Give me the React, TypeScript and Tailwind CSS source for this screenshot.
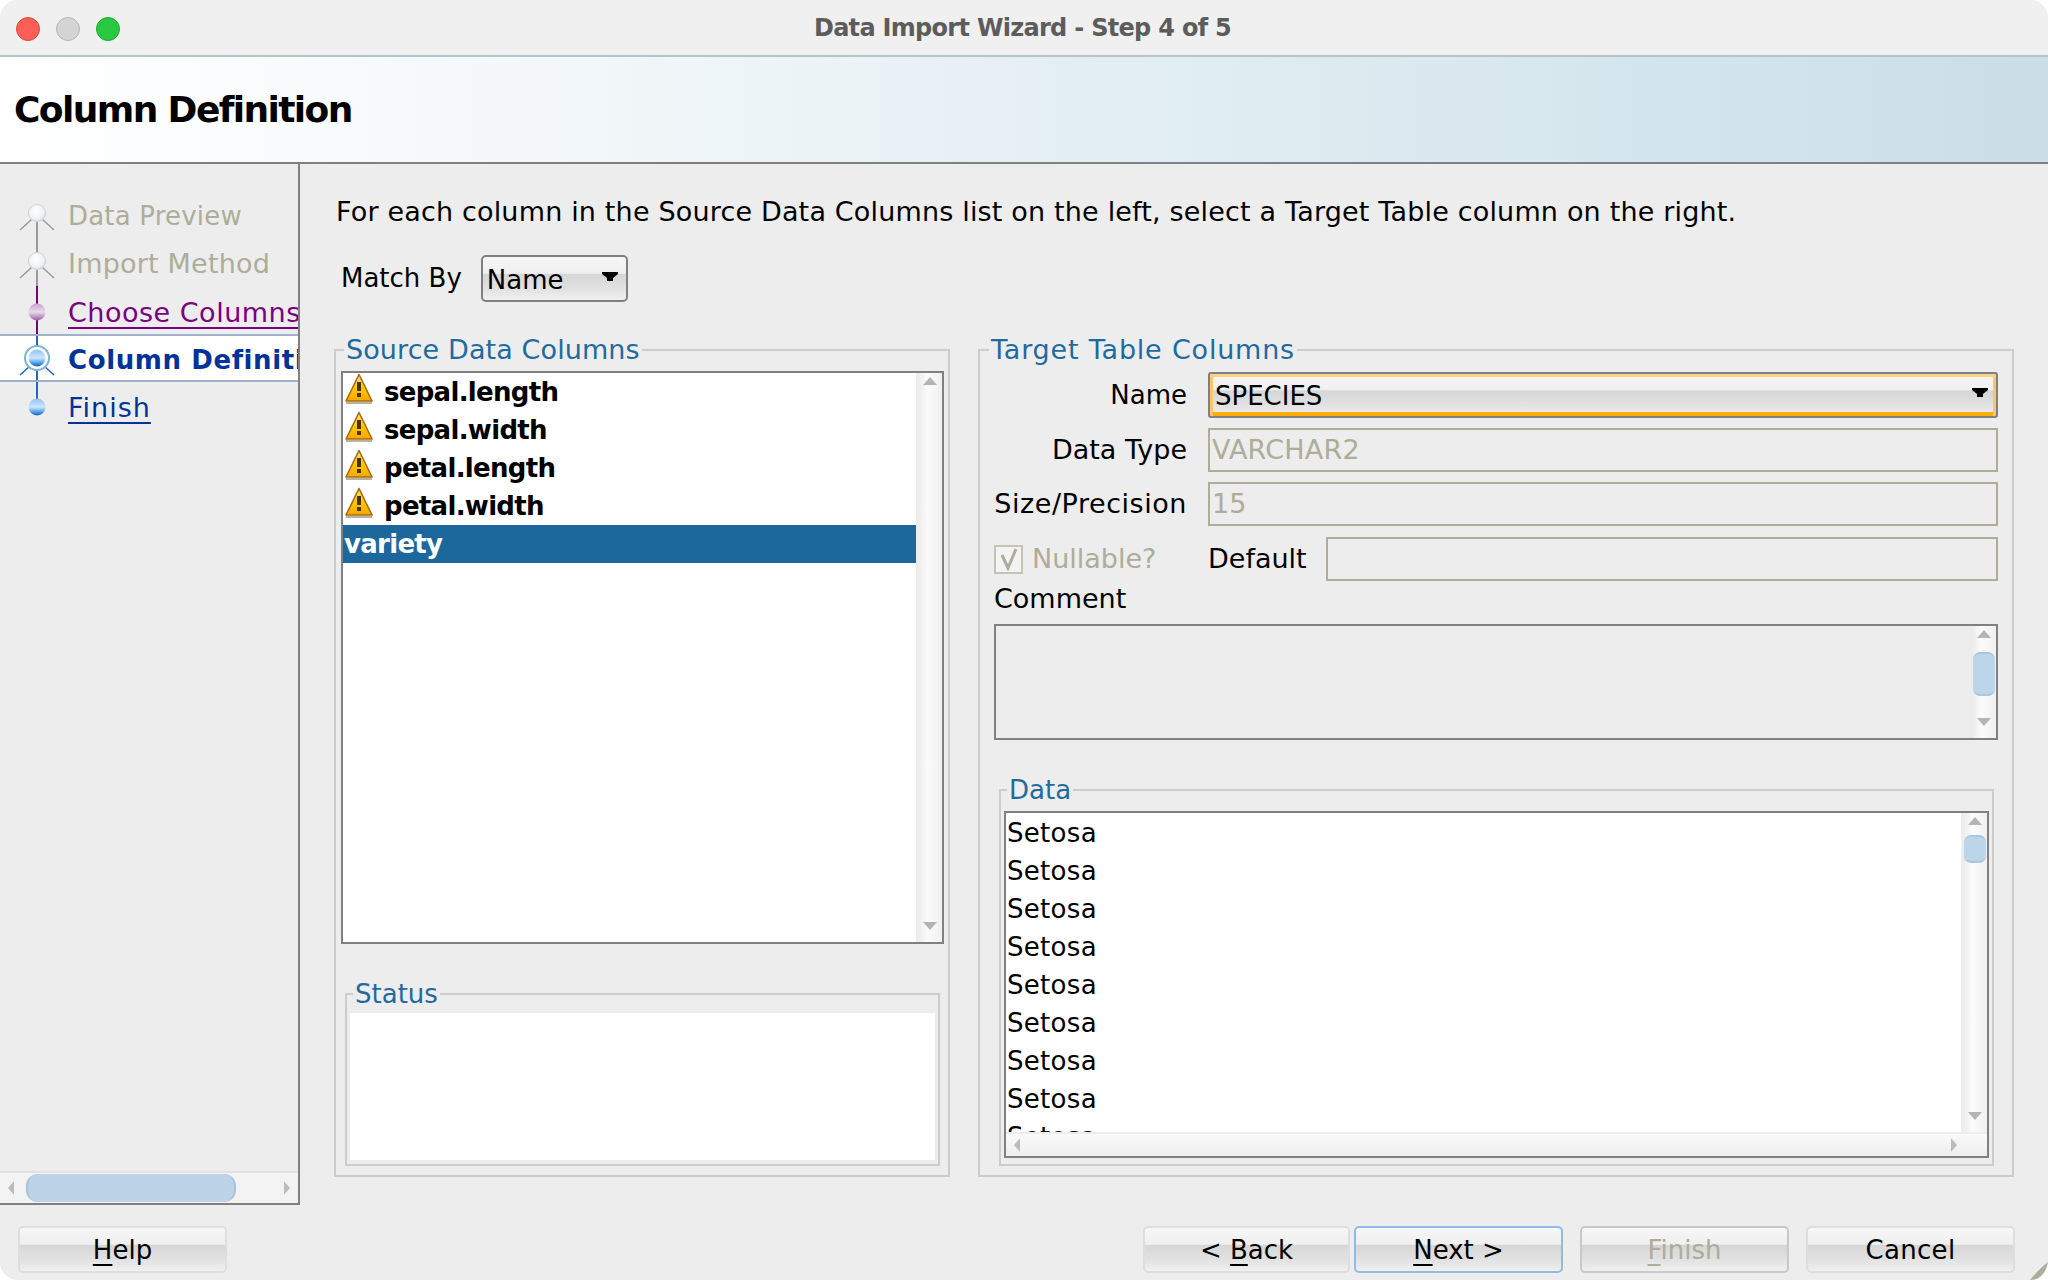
import React from 'react';

const AQUA =
  'bg-[linear-gradient(180deg,#f7f7f7_0%,#efefef_38%,#d6d6d6_40%,#e2e2e2_75%,#f0f0f0_100%)]';

function Warn() {
  return (
    <svg width="30" height="32" viewBox="0 0 30 32" className="shrink-0 -mt-[6px]">
      <defs>
        <linearGradient id="warnFill" x1="0" y1="0" x2="0" y2="1">
          <stop offset="0" stopColor="#ffe680" />
          <stop offset="0.55" stopColor="#ffc400" />
          <stop offset="1" stopColor="#f5a800" />
        </linearGradient>
      </defs>
      <path d="M15 1.5 L28 28 L2 28 Z" fill="url(#warnFill)" stroke="#a86a10" strokeWidth="1.6" strokeLinejoin="round" />
      <path d="M2 30 H28" stroke="#b9b2a0" strokeWidth="2" />
      <rect x="13" y="9" width="4" height="9" fill="#4a3208" />
      <rect x="13" y="20" width="4" height="4" fill="#4a3208" />
    </svg>
  );
}

function Arrow({ dir, color = '#b4b4b4' }: { dir: 'up' | 'down' | 'left' | 'right'; color?: string }) {
  const d = {
    up: 'M0 8 L7 0 L14 8 Z',
    down: 'M0 0 L14 0 L7 8 Z',
    left: 'M8 0 L8 14 L2 7 Z',
    right: 'M0 0 L6 7 L0 14 Z',
  }[dir];
  const vertical = dir === 'up' || dir === 'down';
  return (
    <svg width={vertical ? 14 : 8} height={vertical ? 8 : 14} viewBox={vertical ? '0 0 14 8' : '0 0 8 14'}>
      <path d={d} fill={color} />
    </svg>
  );
}

// the stepped black arrow of the aqua combo boxes
function ComboArrow() {
  return (
    <svg width="16" height="9" viewBox="0 0 16 9" className="-mt-[5px] shrink-0">
      <path d="M0 0 H16 V2 L11 6 V9 H5 V6 L0 2 Z" fill="#000000" />
    </svg>
  );
}

function VScroll({ thumbTop, thumbH, w = 26 }: { thumbTop?: number; thumbH?: number; w?: number }) {
  return (
    <div
      className="relative shrink-0 flex flex-col items-center justify-between pt-[4px] pb-[12px] border-l-2 border-[#ececec] bg-[linear-gradient(90deg,#ececec,#fbfbfb_40%,#f0f0f0)]"
      style={{ width: w }}
    >
      <Arrow dir="up" />
      {thumbH ? (
        <div
          className="absolute left-[1px] right-[1px] rounded-[7px] bg-[#bdd5ea] border-y-2 border-[#a9c6e0]"
          style={{ top: thumbTop, height: thumbH }}
        />
      ) : null}
      <Arrow dir="down" />
    </div>
  );
}

function Train({ kind, h }: { kind: 'visited' | 'visitedLast' | 'link' | 'current' | 'next'; h: number }) {
  const gray = '#9a9a9a';
  const purple = '#7a0080';
  const blue = '#1e66c8';
  return (
    <svg width="68" height={h} viewBox={`0 0 68 ${h}`} className="shrink-0">
      <defs>
        <radialGradient id="visitedBall" cx="0.45" cy="0.4" r="0.7">
          <stop offset="0" stopColor="#ffffff" />
          <stop offset="0.65" stopColor="#eef1f6" />
          <stop offset="1" stopColor="#c4c7cc" />
        </radialGradient>
        <linearGradient id="purpleBall" x1="0" y1="0" x2="0" y2="1">
          <stop offset="0" stopColor="#c9a2cf" />
          <stop offset="0.5" stopColor="#e9dcec" />
          <stop offset="1" stopColor="#9a5aa6" />
        </linearGradient>
        <linearGradient id="blueBall" x1="0" y1="0" x2="0" y2="1">
          <stop offset="0" stopColor="#8cc4f4" />
          <stop offset="0.5" stopColor="#cfe6fb" />
          <stop offset="0.8" stopColor="#4a9cec" />
          <stop offset="1" stopColor="#1a58b8" />
        </linearGradient>
      </defs>
      {kind === 'visited' && (
        <g>
          <path d={`M37 21 V${h}`} stroke={gray} strokeWidth="2" />
          <path d="M32 27 L20 38 M42 27 L54 38" stroke={gray} strokeWidth="1.5" fill="none" />
          <circle cx="37" cy="21" r="8.5" fill="url(#visitedBall)" stroke="#d0d2d6" strokeWidth="1" />
        </g>
      )}
      {kind === 'visitedLast' && (
        <g>
          <path d="M37 0 V46" stroke={gray} strokeWidth="2" />
          <path d={`M37 46 V${h}`} stroke={purple} strokeWidth="2" />
          <path d="M32 27 L20 38 M42 27 L54 38" stroke={gray} strokeWidth="1.5" fill="none" />
          <circle cx="37" cy="21" r="8.5" fill="url(#visitedBall)" stroke="#d0d2d6" strokeWidth="1" />
        </g>
      )}
      {kind === 'link' && (
        <g>
          <path d={`M37 0 V${h}`} stroke={purple} strokeWidth="2" />
          <circle cx="37" cy="24" r="8.5" fill="url(#purpleBall)" />
        </g>
      )}
      {kind === 'current' && (
        <g>
          <path d={`M37 0 V${h}`} stroke={blue} strokeWidth="2" />
          <path d="M30 30 L20 39 M44 30 L54 39" stroke={blue} strokeWidth="1.5" fill="none" />
          <circle cx="37" cy="22" r="12" fill="#ffffff" stroke="#7fb6cf" strokeWidth="2" />
          <circle cx="37" cy="22" r="8.5" fill="url(#blueBall)" />
        </g>
      )}
      {kind === 'next' && (
        <g>
          <path d="M37 0 V25" stroke={blue} strokeWidth="2" />
          <circle cx="37" cy="25" r="8.5" fill="url(#blueBall)" />
        </g>
      )}
    </svg>
  );
}

function Group({
  title,
  className,
  legend,
  children,
}: {
  title: string;
  className?: string;
  legend?: string;
  children: React.ReactNode;
}) {
  return (
    <fieldset className={`min-w-0 border-2 border-[#cccccc] ${className ?? ''}`}>
      <legend className={`px-[2px] h-[32px] leading-[32px] text-[#1f6a9f] ${legend ?? 'ml-[7px]'}`}>{title}</legend>
      {children}
    </fieldset>
  );
}

function Btn({
  children,
  className,
  disabled,
  focused,
}: {
  children: React.ReactNode;
  className?: string;
  disabled?: boolean;
  focused?: boolean;
}) {
  return (
    <div
      className={`h-[47px] pt-[2px] flex items-center justify-center rounded-[5px] border-2 ${AQUA} ${
        focused ? 'border-[#8fbce6]' : disabled ? 'border-[#c8c8c8]' : 'border-[#dedede]'
      } ${disabled ? 'text-[#adad99]' : 'text-black'} ${className ?? ''}`}
    >
      {children}
    </div>
  );
}

function Mn({ children }: { children: React.ReactNode }) {
  return <span className="underline decoration-2 underline-offset-[5px]">{children}</span>;
}

export default function App() {
  return (
    <div className="w-[2048px] h-[1280px] bg-white font-['DejaVu_Sans','Liberation_Sans',sans-serif] text-[26px] text-black">
      <div className="relative w-full h-full rounded-[18px] overflow-hidden bg-[#ededed] flex flex-col">
        {/* title bar */}
        <div className="relative h-[57px] shrink-0 bg-[#f0f0f0] border-b-2 border-[#b4c4c9] flex items-center justify-center">
          <div className="absolute left-[16px] top-[17px] flex gap-[16px]">
            <span className="w-[24px] h-[24px] rounded-full bg-[#ff5f57] border border-[#e0443e]" />
            <span className="w-[24px] h-[24px] rounded-full bg-[#d4d4d4] border border-[#b5b5b5]" />
            <span className="w-[24px] h-[24px] rounded-full bg-[#28c840] border border-[#1aab29]" />
          </div>
          <span className="font-bold text-[#5c5c5c] text-[24px] tracking-[-0.7px] pr-[3px]">Data Import Wizard - Step 4 of 5</span>
        </div>

        {/* header */}
        <div className="h-[107px] shrink-0 pl-[14px] flex items-center border-b-2 border-[#808080] bg-[linear-gradient(90deg,#ffffff_0%,#f4f8fa_25%,#d2e5ec_83%,#c9dfe5_100%)]">
          <span className="font-bold text-[36px] tracking-[-1.6px]">Column Definition</span>
        </div>

        <div className="flex h-[1041px] shrink-0">
          {/* sidebar */}
          <div className="w-[300px] shrink-0 border-r-2 border-b-2 border-[#808080] flex flex-col justify-between overflow-hidden">
            <div className="pt-[28px] whitespace-nowrap">
              <div className="h-[48px] flex items-center text-[#adad99] tracking-[0.2px]">
                <Train kind="visited" h={48} />
                Data Preview
              </div>
              <div className="h-[48px] flex items-center text-[#adad99] text-[27px] tracking-[0.2px]">
                <Train kind="visitedLast" h={48} />
                Import Method
              </div>
              <div className="h-[46px] flex items-center text-[#7a0080] overflow-hidden text-[27px] tracking-[0.5px]">
                <Train kind="link" h={46} />
                <span className="pt-[4px] underline decoration-2 underline-offset-[5px]">Choose Columns</span>
              </div>
              <div className="h-[48px] flex items-center bg-white border-y-2 border-[#9fb1cb] text-[#003399] font-bold overflow-hidden tracking-[0.6px]">
                <Train kind="current" h={44} />
                <span className="pt-[4px]">Column Definition</span>
              </div>
              <div className="h-[50px] flex items-center text-[#003399] text-[27px] tracking-[1px]">
                <Train kind="next" h={50} />
                <span className="pt-[2px] underline decoration-2 underline-offset-[5px]">Finish</span>
              </div>
            </div>
            <div className="relative h-[32px] flex items-center justify-between px-[6px] border-t-2 border-[#e2e2e2] bg-[#f3f3f3]">
              <Arrow dir="left" color="#bcbcbc" />
              <div className="absolute left-[26px] top-[1px] w-[210px] h-[28px] rounded-[12px] bg-[#bcd3e8] border-x-2 border-[#a6c3dd]" />
              <Arrow dir="right" color="#bcbcbc" />
            </div>
          </div>

          {/* main */}
          <div className="flex-1 min-w-0 pl-[34px] pr-[34px] pt-[30px]">
            <div className="ml-[2px] h-[36px] leading-[36px] whitespace-nowrap text-[27px] tracking-[0.17px]">
              For each column in the Source Data Columns list on the left, select a Target Table column on the right.
            </div>
            <div className="mt-[25px] ml-[7px] flex items-center gap-[19px]">
              <span>Match By</span>
              <div className={`w-[147px] h-[47px] rounded-[5px] border-2 border-[#808080] pl-[4px] pr-[8px] flex items-center justify-between ${AQUA}`}>
                <span className="pt-[3px]">Name</span>
                <ComboArrow />
              </div>
            </div>

            <div className="mt-[32px] grid grid-cols-[616px_1036px] gap-x-[28px] h-[843px]">
              {/* left column */}
              <Group title="Source Data Columns" legend="ml-[3px] text-[27px] tracking-[0.1px]" className="pl-[5px] pr-[4px]">
                <div className="mt-[5px] h-[573px] border-2 border-[#808080] bg-white flex">
                  <div className="flex-1 min-w-0 font-bold tracking-[-0.7px]">
                    {['sepal.length', 'sepal.width', 'petal.length', 'petal.width'].map((name) => (
                      <div key={name} className="h-[38px] flex items-center pl-[1px] gap-[10px]">
                        <Warn />
                        {name}
                      </div>
                    ))}
                    <div className="h-[38px] flex items-center pl-[1px] bg-[#1c689c] text-white">variety</div>
                  </div>
                  <VScroll />
                </div>
                <Group title="Status" legend="ml-[3px]" className="mt-[34px] ml-[4px] mr-[4px] h-[188px] px-[3px]">
                  <div className="mt-[3px] h-[147px] bg-white" />
                </Group>
              </Group>

              {/* right column */}
              <Group title="Target Table Columns" legend="ml-[-5px] text-[27px] tracking-[0.8px]" className="pl-[14px] pr-[14px]">
                <div className="mt-[6px] grid grid-cols-[193px_1fr] gap-x-[21px] items-center">
                  <span className="text-right">Name</span>
                  <div
                    className={`h-[46px] rounded-[3px] border-2 border-[#808080] flex items-center justify-between pl-[5px] pr-[8px] shadow-[inset_0_3px_0_#fdd08a,inset_3px_0_0_#fcc56c,inset_-3px_0_0_#fcc56c,inset_0_-4px_0_#ffad0a] ${AQUA}`}
                  >
                    <span className="pt-[2px]">SPECIES</span>
                    <ComboArrow />
                  </div>
                  <span className="mt-[10px] text-right text-[27px]">Data Type</span>
                  <div className="mt-[10px] h-[44px] border-2 border-[#adad99] pl-[2px] flex items-center text-[#adad99] text-[27px] tracking-[0.2px]">VARCHAR2</div>
                  <span className="mt-[10px] text-right text-[27px] tracking-[0.55px]">Size/Precision</span>
                  <div className="mt-[10px] h-[44px] border-2 border-[#adad99] pl-[2px] flex items-center text-[#adad99] text-[27px]">15</div>
                </div>
                <div className="mt-[11px] flex items-center h-[44px]">
                  <div className="w-[29px] h-[29px] border-2 border-[#c4c4b4] bg-[#f3f3f3] flex items-center justify-center">
                    <svg width="20" height="24" viewBox="0 0 20 24">
                      <path d="M3 8 L9 21 L17 2" fill="none" stroke="#adad99" strokeWidth="3" />
                    </svg>
                  </div>
                  <span className="ml-[9px] w-[176px] text-[#adad99] text-[27px]">Nullable?</span>
                  <span className="w-[118px] text-[27px]">Default</span>
                  <div className="flex-1 h-[44px] border-2 border-[#adad99]" />
                </div>
                <div className="h-[36px] leading-[36px] text-[27px]">Comment</div>
                <div className="mt-[7px] h-[116px] border-2 border-[#808080] flex justify-end">
                  <VScroll thumbTop={26} thumbH={44} w={26} />
                </div>
                <Group title="Data" legend="ml-[3px]" className="mt-[34px] ml-[5px] mr-[4px] h-[392px] pl-[3px] pr-[3px]">
                  <div className="mt-[5px] h-[347px] border-2 border-[#808080] bg-white flex flex-col">
                    <div className="flex flex-1 min-h-0">
                      <div className="flex-1 min-w-0 overflow-hidden pl-[1px] pt-[1px] tracking-[0.3px]">
                        {Array.from({ length: 9 }).map((_, i) => (
                          <div key={i} className="h-[38px] leading-[38px]">
                            Setosa
                          </div>
                        ))}
                      </div>
                      <VScroll thumbTop={22} thumbH={28} />
                    </div>
                    <div className="h-[24px] shrink-0 flex items-center justify-between pl-[6px] pr-[28px] border-t-2 border-[#ececec] bg-[linear-gradient(180deg,#fafafa,#eeeeee)]">
                      <Arrow dir="left" color="#bcbcbc" />
                      <Arrow dir="right" color="#bcbcbc" />
                    </div>
                  </div>
                </Group>
              </Group>
            </div>
          </div>
        </div>

        {/* footer */}
        <div className="flex-1 pl-[18px] pr-[33px] pt-[21px] flex justify-between items-start">
          <Btn className="w-[209px]">
            <span><Mn>H</Mn>elp</span>
          </Btn>
          <div className="flex">
            <Btn className="w-[207px]">
              <span>&lt; <Mn>B</Mn>ack</span>
            </Btn>
            <Btn focused className="ml-[4px] w-[209px]">
              <span><Mn>N</Mn>ext &gt;</span>
            </Btn>
            <Btn disabled className="ml-[17px] w-[209px]">
              <span><Mn>F</Mn>inish</span>
            </Btn>
            <Btn className="ml-[17px] w-[209px] tracking-[0.3px]">Cancel</Btn>
          </div>
        </div>
        <svg width="18" height="18" viewBox="0 0 18 18" className="absolute right-0 bottom-0">
          <path d="M0 18 Q8 8 18 0 Q16 12 6 18 Z" fill="#adad99" />
        </svg>
      </div>
    </div>
  );
}
